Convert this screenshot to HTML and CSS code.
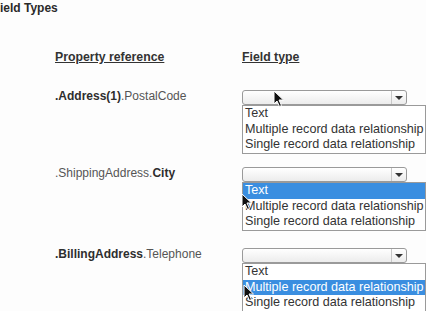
FILE: index.html
```html
<!DOCTYPE html>
<html>
<head>
<meta charset="utf-8">
<link rel="stylesheet" href="styles.css">
</head>
<body>
<div class="page">
  <div class="title">ield Types</div>
  <div class="form">
    <div class="head">Property reference</div>
    <div class="head">Field type</div>

    <div class="label r1"><b>.Address(1)</b>.PostalCode</div>
    <div class="field r1">
      <div class="select"><span class="arrow"></span></div>
      <ul class="list">
        <li>Text</li>
        <li>Multiple record data relationship</li>
        <li>Single record data relationship</li>
      </ul>
    </div>

    <div class="label r2">.ShippingAddress.<b>City</b></div>
    <div class="field r2">
      <div class="select"><span class="arrow"></span></div>
      <ul class="list">
        <li class="sel">Text</li>
        <li>Multiple record data relationship</li>
        <li>Single record data relationship</li>
      </ul>
    </div>

    <div class="label r3"><b>.BillingAddress</b>.Telephone</div>
    <div class="field r3">
      <div class="select"><span class="arrow"></span></div>
      <ul class="list">
        <li>Text</li>
        <li class="sel">Multiple record data relationship</li>
        <li>Single record data relationship</li>
      </ul>
    </div>
  </div>

  <svg class="cursor c1" width="12" height="18" viewBox="0 0 12 18"><path d="M1 1 L1 14 L4 11 L6.5 16.5 L8.5 15.5 L6 10 L10.5 10 Z" fill="#111" stroke="#fff" stroke-width="1"/></svg>
  <svg class="cursor c2" width="12" height="18" viewBox="0 0 12 18"><path d="M1 1 L1 14 L4 11 L6.5 16.5 L8.5 15.5 L6 10 L10.5 10 Z" fill="#111" stroke="#fff" stroke-width="1"/></svg>
  <svg class="cursor c3" width="12" height="18" viewBox="0 0 12 18"><path d="M1 1 L1 14 L4 11 L6.5 16.5 L8.5 15.5 L6 10 L10.5 10 Z" fill="#111" stroke="#fff" stroke-width="1"/></svg>
</div>
</body>
</html>
```

FILE: styles.css
```css
* { box-sizing: border-box; }
html, body { margin: 0; padding: 0; }
body {
  background: #fdfdfd;
  font-family: "Liberation Sans", Arial, sans-serif;
  color: #333;
  overflow: hidden;
}
.page {
  position: relative;
  width: 426px;
  height: 311px;
}
.title {
  font-weight: bold;
  font-size: 12px;
  line-height: 16px;
  color: #2a2a2a;
}
.form {
  display: grid;
  grid-template-columns: 187px 184px;
  padding-left: 55px;
  margin-top: 34px;
}
.head {
  font-weight: bold;
  font-size: 12.3px;
  line-height: 14px;
  text-decoration: underline;
  color: #333;
}
.label {
  font-size: 12px;
  line-height: 13px;
  color: #555;
  align-self: start;
}
.label b { color: #2e2e2e; }
.r1 { margin-top: 26px; }
.r2 { margin-top: 13.5px; }
.r3 { margin-top: 17.5px; }
.field {
  display: flex;
  flex-direction: column;
}
.select {
  width: 165px;
  height: 15px;
  border: 1px solid #9a9a9a;
  border-radius: 3px;
  background: linear-gradient(#ffffff, #ececec);
  display: flex;
  justify-content: flex-end;
}
.arrow {
  width: 15px;
  border-left: 1px solid #c8c8c8;
  display: flex;
  align-items: center;
  justify-content: center;
}
.arrow::after {
  content: "";
  border-left: 4px solid transparent;
  border-right: 4px solid transparent;
  border-top: 4px solid #333;
}
.list {
  list-style: none;
  margin: 0;
  padding: 0;
  width: 184px;
  border: 1px solid #9a9a9a;
  background: #fff;
}
.list li {
  font-size: 12.6px;
  line-height: 15.5px;
  padding-left: 2px;
  color: #333;
  white-space: nowrap;
}
.list li.sel {
  background: #3a8ee0;
  color: #fff;
}
.cursor {
  position: absolute;
}
.c1 { left: 273px; top: 90px; }
.c2 { left: 241px; top: 193px; }
.c3 { left: 243px; top: 284px; }
```
